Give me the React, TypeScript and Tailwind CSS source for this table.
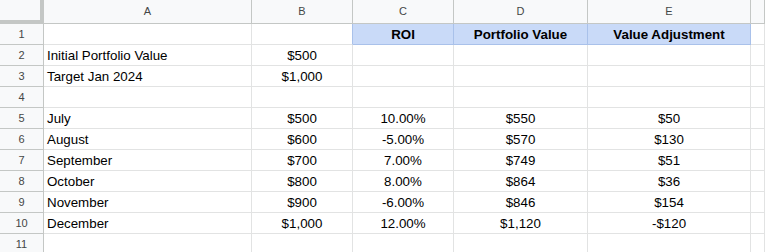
import React from "react";

const cols = ["A", "B", "C", "D", "E", ""];

type Row = [string, string, string, string, string];

const rows: Row[] = [
  ["", "", "ROI", "Portfolio Value", "Value Adjustment"],
  ["Initial Portfolio Value", "$500", "", "", ""],
  ["Target Jan 2024", "$1,000", "", "", ""],
  ["", "", "", "", ""],
  ["July", "$500", "10.00%", "$550", "$50"],
  ["August", "$600", "-5.00%", "$570", "$130"],
  ["September", "$700", "7.00%", "$749", "$51"],
  ["October", "$800", "8.00%", "$864", "$36"],
  ["November", "$900", "-6.00%", "$846", "$154"],
  ["December", "$1,000", "12.00%", "$1,120", "-$120"],
  ["", "", "", "", ""],
];

export default function App() {
  return (
    <div
      className="w-[765px] h-[252px] overflow-hidden bg-white"
      style={{ fontFamily: '"Liberation Sans", Arial, sans-serif' }}
    >
      <div className="grid grid-cols-[44px_208px_101px_101px_134px_163px_1fr] grid-rows-[24px_repeat(11,21px)]">
        {/* header row */}
        <div className="bg-[#f8f9fa] border-r-4 border-b-4 border-[#c4c7c5]" />
        {cols.map((c, i) => (
          <div
            key={i}
            className="bg-[#f8f9fa] border-r border-b border-[#c4c7c5] flex items-center justify-center text-[11px] text-[#444746]"
          >
            {c}
          </div>
        ))}
        {rows.map((r, ri) => (
          <React.Fragment key={ri}>
            <div className="bg-[#f8f9fa] border-r border-b border-[#c4c7c5] flex items-center justify-center pt-[1px] text-[11px] text-[#444746]">
              {ri + 1}
            </div>
            {r.map((v, ci) => {
              const isHead = ri === 0 && ci >= 2;
              const leftOfHead = ri === 0 && ci === 1;
              const align = ci === 0 ? "justify-start pl-[3px]" : "justify-center";
              let cls =
                "flex items-center pt-[1px] whitespace-nowrap overflow-hidden text-[13.33px] text-black border-r border-b ";
              if (isHead) {
                cls += "bg-[#c9daf8] border-[#a9c1ea] font-bold ";
              } else if (leftOfHead) {
                cls += "border-b-[#e2e3e3] border-r-[#a9c1ea] ";
              } else {
                cls += "border-[#e2e3e3] ";
              }
              return (
                <div key={ci} className={cls + align}>
                  {v}
                </div>
              );
            })}
            <div className="border-r border-b border-[#e2e3e3]" />
          </React.Fragment>
        ))}
      </div>
    </div>
  );
}
